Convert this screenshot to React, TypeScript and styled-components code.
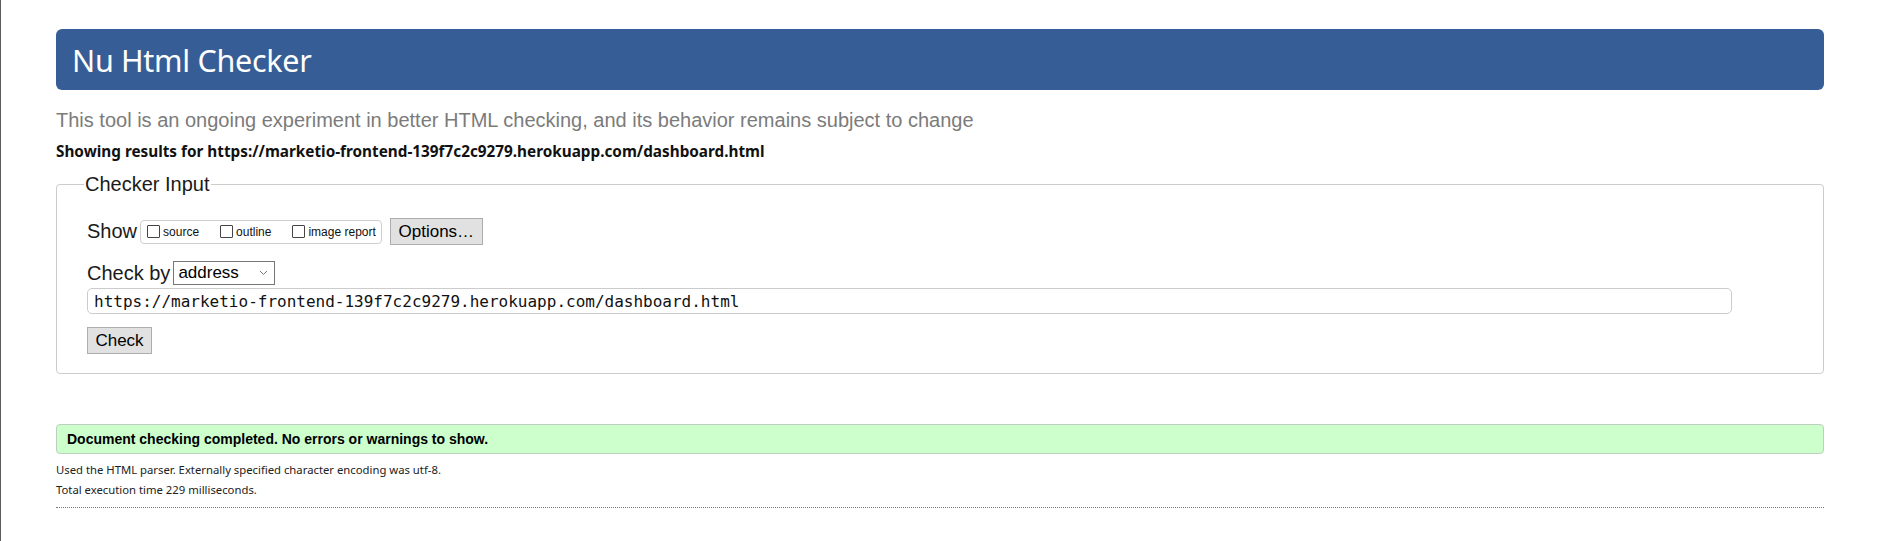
import styled, { createGlobalStyle } from "styled-components";

const GlobalStyle = createGlobalStyle`
  html, body {
    margin: 0;
    padding: 0;
    background: #ffffff;
  }
  body {
    font-family: "Liberation Sans", Arial, sans-serif;
    color: #000;
  }
`;

const Page = styled.div`
  min-height: 541px;
  box-sizing: border-box;
  border-left: 1px solid #5c5c5c;
  padding: 29px 55px 0 55px;
  display: flex;
  flex-direction: column;
`;

const Header = styled.h1`
  margin: 0;
  height: 61px;
  display: flex;
  align-items: center;
  padding-left: 16px;
  background: #365d95;
  border-radius: 6px;
  color: #ffffff;
  font-family: "Noto Sans", "Open Sans", sans-serif;
  font-weight: 400;
  font-size: 30.5px;
  letter-spacing: -0.3px;
`;

const About = styled.p`
  margin: 18px 0 0 0;
  line-height: 24px;
  font-size: 20px;
  color: #7b7b7b;
`;

const Showing = styled.p`
  margin: 10px 0 0 0;
  line-height: 19px;
  font-family: "Noto Sans", "Open Sans", sans-serif;
  font-weight: 700;
  font-size: 15.3px;
  color: #111;
`;

const Fieldset = styled.fieldset`
  margin: 11px 0 0 0;
  padding: 22px 30px 19px 30px;
  border: 1px solid #cccccc;
  border-radius: 4px;
  display: flex;
  flex-direction: column;
  align-items: flex-start;
`;

const Legend = styled.legend`
  padding: 0 1px;
  margin-left: -3px;
  font-size: 20px;
  line-height: 24px;
  color: #1a1a1a;
`;

const Row = styled.div<{ $gap?: number }>`
  display: flex;
  align-items: center;
  margin-top: ${(p) => p.$gap ?? 0}px;
  font-size: 20px;
  color: #1a1a1a;
`;

const Label = styled.span`
  margin-right: 3px;
  white-space: nowrap;
`;

const ChoiceGroup = styled.div`
  display: flex;
  align-items: center;
  gap: 21px;
  height: 24px;
  flex-shrink: 0;
  box-sizing: border-box;
  padding: 0 5px 0 6px;
  border: 1px solid #cfcfcf;
  border-radius: 4px;
`;

const Choice = styled.label`
  display: flex;
  align-items: center;
  gap: 3px;
  white-space: nowrap;
  font-size: 12px;
  color: #111;
`;

const Box = styled.span`
  width: 13px;
  height: 13px;
  flex-shrink: 0;
  box-sizing: border-box;
  border: 1px solid #444;
  border-radius: 1px;
  background: #fff;
`;

const Button = styled.button<{ $w: number; $h: number; $left?: number }>`
  width: ${(p) => p.$w}px;
  height: ${(p) => p.$h}px;
  margin-left: ${(p) => p.$left ?? 0}px;
  flex-shrink: 0;
  padding: 0;
  border: 1px solid #adadad;
  background: #e1e1e1;
  font-family: "Liberation Sans", Arial, sans-serif;
  font-size: 17px;
  color: #000;
`;

const Select = styled.div`
  display: flex;
  align-items: center;
  justify-content: space-between;
  width: 102px;
  height: 24px;
  box-sizing: border-box;
  padding: 0 6px 0 4px;
  border: 1px solid #767676;
  font-size: 17px;
  color: #000;
`;

const UrlInput = styled.div`
  width: 1645px;
  height: 26px;
  box-sizing: border-box;
  margin-top: 3px;
  padding: 0 0 0 6px;
  display: flex;
  align-items: center;
  border: 1px solid #cccccc;
  border-radius: 5px;
  font-family: "DejaVu Sans Mono", "Liberation Mono", monospace;
  font-size: 16px;
  color: #111;
`;

const Success = styled.div`
  margin-top: 50px;
  height: 30px;
  box-sizing: border-box;
  padding-left: 10px;
  display: flex;
  align-items: center;
  background: #ccffcc;
  border: 1px solid #bccfbc;
  border-radius: 4px;
  font-weight: 700;
  font-size: 14px;
  color: #000;
`;

const Note = styled.p<{ $top: number }>`
  margin: ${(p) => p.$top}px 0 0 0;
  line-height: 16px;
  font-family: "Noto Sans", "Open Sans", sans-serif;
  font-size: 11.3px;
  color: #222;
`;

const Rule = styled.hr`
  margin: 9px 0 0 0;
  border: 0;
  border-top: 1px dotted #7a7a7a;
`;

function Chevron() {
  return (
    <svg width="9" height="6" viewBox="0 0 9 6">
      <path d="M1 1l3.5 3.5L8 1" fill="none" stroke="#777" strokeWidth="1" />
    </svg>
  );
}

const url = "https://marketio-frontend-139f7c2c9279.herokuapp.com/dashboard.html";

function App() {
  return (
    <Page>
      <GlobalStyle />
      <Header>Nu Html Checker</Header>
      <About>
        This tool is an ongoing experiment in better HTML checking, and its
        behavior remains subject to change
      </About>
      <Showing>Showing results for {url}</Showing>
      <Fieldset>
        <Legend>Checker Input</Legend>
        <Row>
          <Label>Show</Label>
          <ChoiceGroup>
            <Choice>
              <Box />
              source
            </Choice>
            <Choice>
              <Box />
              outline
            </Choice>
            <Choice>
              <Box />
              image report
            </Choice>
          </ChoiceGroup>
          <Button $w={93} $h={27} $left={8}>
            Options…
          </Button>
        </Row>
        <Row $gap={16}>
          <Label>Check by</Label>
          <Select>
            address
            <Chevron />
          </Select>
        </Row>
        <UrlInput>{url}</UrlInput>
        <Row $gap={13}>
          <Button $w={65} $h={27}>
            Check
          </Button>
        </Row>
      </Fieldset>
      <Success>Document checking completed. No errors or warnings to show.</Success>
      <Note $top={8}>
        Used the HTML parser. Externally specified character encoding was utf-8.
      </Note>
      <Note $top={4}>Total execution time 229 milliseconds.</Note>
      <Rule />
    </Page>
  );
}

export default App;
